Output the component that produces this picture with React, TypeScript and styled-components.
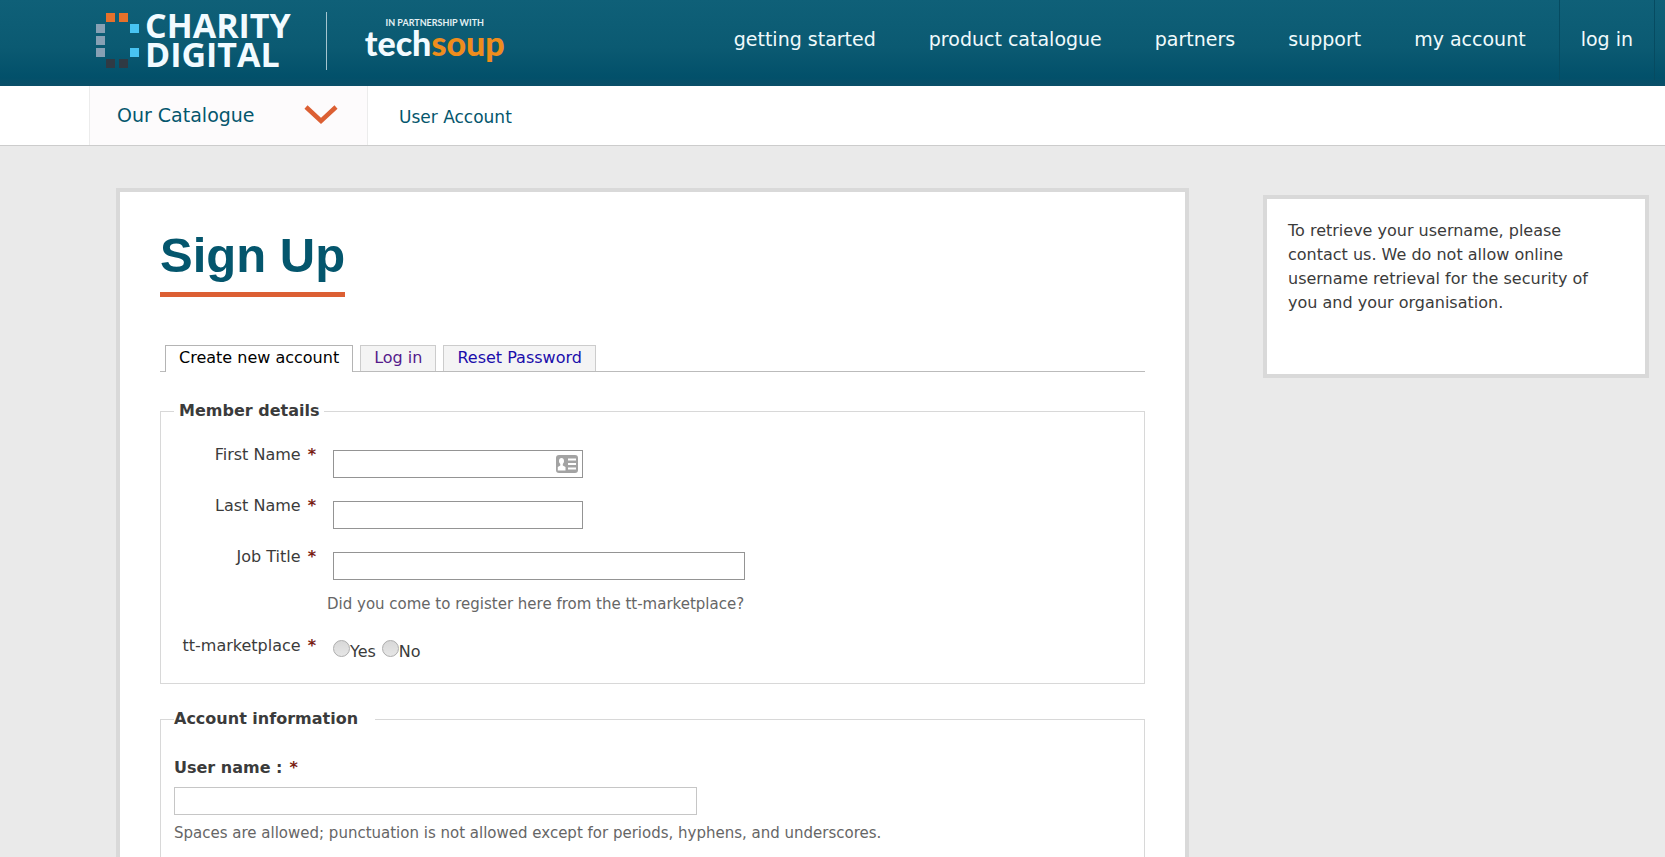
import React from "react";
import styled, { createGlobalStyle } from "styled-components";

const teal = "#04566d";
const orange = "#dc5f33";

const GlobalStyle = createGlobalStyle`
  *, *::before, *::after { box-sizing: border-box; }
  body {
    margin: 0;
    background: #eaeaea;
    color: #3b3b3b;
    font-family: "DejaVu Sans", Verdana, sans-serif;
    font-size: 16px;
    line-height: 24px;
  }
  a { text-decoration: none; }
`;

const Page = styled.div`
  display: flex;
  flex-direction: column;
  min-height: 100vh;
`;

const Header = styled.header`
  display: flex;
  justify-content: space-between;
  height: 86px;
  padding: 0 10px 0 95px;
  background: linear-gradient(#0f6078, #0b5a72 55%, #02506a 90%, #0a4f68);
`;

const Brand = styled.a`
  display: flex;
  align-items: flex-start;
  color: #fff;
`;

const LogoMark = styled.svg`
  flex: none;
  margin-top: 12px;
`;

const BrandName = styled.span`
  margin: 11px 0 0 4px;
  font: 700 34px/29px "Open Sans", "Noto Sans", sans-serif;
  color: #f2fbff;
`;

const BrandLine = styled.span`
  display: block;
`;

const BrandDivider = styled.span`
  width: 1px;
  height: 58px;
  margin: 12px 38px 0 35px;
  background: #a5c5cf;
`;

const Partner = styled.span`
  display: flex;
  flex-direction: column;
  align-items: center;
  margin-top: 17px;
`;

const PartnerNote = styled.span`
  font: 700 9px/12px Lato, sans-serif;
  color: #e3f0f3;
`;

const PartnerName = styled.span`
  font: 900 34px/28px Lato, sans-serif;
  color: #f2fbff;
`;

const PartnerAccent = styled.span`
  color: #ee8d1d;
`;

const TopNav = styled.nav`
  display: flex;
  gap: 53px;
  font-size: 19px;
  line-height: 78px;
`;

const TopLink = styled.a<{ $boxed?: boolean }>`
  color: #f0fafc;
  height: 80px;
  ${(p) =>
    p.$boxed &&
    `
    margin-left: -20px;
    padding: 0 21px 0 21px;
    border: solid #064b61;
    border-width: 0 1px;
  `}
`;

const SubNav = styled.nav`
  display: flex;
  height: 60px;
  padding-left: 89px;
  background: #fff;
  border-bottom: 1px solid #ccc;
`;

const CatalogueButton = styled.button`
  display: flex;
  align-items: center;
  justify-content: space-between;
  width: 279px;
  padding: 0 29px 2px 27px;
  border: solid #ececec;
  border-width: 0 1px;
  background: #fdfbfc;
  color: ${teal};
  font: 19px/24px "DejaVu Sans", Verdana, sans-serif;
`;

const AccountLink = styled.a`
  margin-left: 31px;
  color: ${teal};
  font-size: 17px;
  line-height: 62px;
`;

const Body = styled.div`
  display: flex;
  flex: 1;
  align-items: flex-start;
  gap: 74px;
  padding: 42px 16px 0 116px;
`;

const Panel = styled.main`
  flex: 1;
  align-self: stretch;
  display: flex;
  flex-direction: column;
  align-items: stretch;
  padding: 36px 40px 0;
  border: 4px solid #d9d9d9;
  border-bottom: 0;
  background: #fff;
`;

const Title = styled.h1`
  align-self: flex-start;
  margin: 0 0 48px;
  padding-bottom: 10px;
  border-bottom: 5px solid ${orange};
  color: ${teal};
  font: 700 49px/54px "Liberation Sans", Arial, sans-serif;
`;

const Tabs = styled.nav`
  display: flex;
  gap: 7px;
  padding-left: 5px;
  border-bottom: 1px solid #bbb;
`;

const Tab = styled.a<{ $active?: boolean; $visited?: boolean }>`
  height: ${(p) => (p.$active ? 27 : 26)}px;
  margin-bottom: ${(p) => (p.$active ? -1 : 0)}px;
  padding: 0 13px;
  border: 1px solid ${(p) => (p.$active ? "#b4b4b4" : "#ccc")};
  border-bottom: 0;
  background: ${(p) => (p.$active ? "#fff" : "#f4f4f4")};
  color: ${(p) => (p.$active ? "#000" : p.$visited ? "#551a8b" : "#1a0dab")};
`;

const Form = styled.form`
  display: flex;
  flex: 1;
  flex-direction: column;
`;

const Fieldset = styled.fieldset<{ $open?: boolean }>`
  min-width: 0;
  margin: ${(p) => (p.$open ? 23 : 27)}px 0 0;
  padding: ${(p) => (p.$open ? "25px 13px 4px" : "20px 13px 3px 0")};
  border: 1px solid #d8d8d8;
  ${(p) => p.$open && "flex: 1; border-bottom: 0;"}
`;

const Legend = styled.legend<{ $flush?: boolean }>`
  margin-left: ${(p) => (p.$flush ? 0 : 13)}px;
  padding: ${(p) => (p.$flush ? "0 17px 0 0" : "0 5px")};
  font-weight: 700;
`;

const Row = styled.div`
  display: grid;
  grid-template-columns: 155px 1fr;
  column-gap: 17px;
  margin-bottom: 16px;
`;

const RowLabel = styled.label`
  text-align: right;
`;

const Required = styled.span`
  margin-left: 7px;
  color: #7a1d13;
  font-weight: 700;
`;

const InputWrap = styled.div<{ $width: number }>`
  position: relative;
  width: ${(p) => p.$width}px;
  max-width: 100%;
  height: 28px;
  margin-top: 7px;
`;

const TextInput = styled.input<{ $light?: boolean }>`
  display: block;
  width: 100%;
  height: 28px;
  padding: 2px 6px;
  border: 1px solid ${(p) => (p.$light ? "#c6c6c6" : "#949494")};
  background: #fff;
  font: inherit;
`;

const ContactIcon = styled.svg`
  position: absolute;
  top: 5px;
  right: 5px;
`;

const Hint = styled.p<{ $indent?: boolean }>`
  margin: ${(p) => (p.$indent ? "-4px 0 18px 166px" : "6px 0 0")};
  color: #666;
  font-size: 15px;
`;

const RadioGroup = styled.div`
  display: flex;
  gap: 6px;
  margin-top: 6px;
`;

const RadioLabel = styled.label`
  display: flex;
  align-items: flex-start;
`;

const Radio = styled.input`
  appearance: none;
  width: 17px;
  height: 17px;
  margin: 0;
  border: 1px solid #adadad;
  border-radius: 50%;
  background: linear-gradient(#d8d8d8, #e6e6e6);
`;

const BlockLabel = styled.label`
  display: block;
  font-weight: 700;
`;

const Aside = styled.aside`
  flex: 0 0 386px;
  min-height: 183px;
  margin-top: 7px;
  padding: 20px 40px 20px 21px;
  border: 4px solid #d9d9d9;
  background: #fff;
`;

const AsideText = styled.p`
  margin: 0;
`;

const links = ["getting started", "product catalogue", "partners", "support", "my account"];

const squares: [number, number, string][] = [
  [11, 1, "#e6712b"],
  [24, 1, "#e6712b"],
  [1, 12, "#87a0b4"],
  [1, 24, "#87a0b4"],
  [1, 36, "#87a0b4"],
  [35, 12, "#48c4f2"],
  [35, 36, "#48c4f2"],
  [11, 47, "#2f3a44"],
  [24, 47, "#2f3a44"],
];

function Field({ id, label, width, icon }: { id: string; label: string; width: number; icon?: boolean }) {
  return (
    <Row>
      <RowLabel htmlFor={id}>
        {label}
        <Required>*</Required>
      </RowLabel>
      <InputWrap $width={width}>
        <TextInput id={id} type="text" />
        {icon && (
          <ContactIcon width="22" height="18" viewBox="0 0 22 18" aria-hidden="true">
            <rect width="22" height="18" rx="3" fill="#a3a3a3" />
            <path
              d="M5.5 3C7 3 8 4.200 8 6C8 7.300 7.500 8.300 6.800 8.900V10.500L9.500 12V15.500H1.800V12L4.300 10.500V8.900C3.500 8.300 3 7.300 3 6C3 4.200 4 3 5.500 3Z"
              fill="#fff"
            />
            <path d="M12 4.500H20M12 9H20M12 13.500H20" stroke="#fff" strokeWidth="2" />
          </ContactIcon>
        )}
      </InputWrap>
    </Row>
  );
}

export default function App() {
  return (
    <>
      <GlobalStyle />
      <Page>
        <Header>
          <Brand href="#">
            <LogoMark width="46" height="58" viewBox="0 0 46 58" aria-hidden="true">
              {squares.map(([x, y, fill]) => (
                <rect key={`${x}-${y}`} x={x} y={y} width="9" height="9" fill={fill} />
              ))}
            </LogoMark>
            <BrandName>
              <BrandLine>CHARITY</BrandLine>
              <BrandLine>DIGITAL</BrandLine>
            </BrandName>
            <BrandDivider />
            <Partner>
              <PartnerNote>IN PARTNERSHIP WITH</PartnerNote>
              <PartnerName>
                tech<PartnerAccent>soup</PartnerAccent>
              </PartnerName>
            </Partner>
          </Brand>
          <TopNav>
            {links.map((text) => (
              <TopLink key={text} href="#">
                {text}
              </TopLink>
            ))}
            <TopLink href="#" $boxed>
              log in
            </TopLink>
          </TopNav>
        </Header>
        <SubNav>
          <CatalogueButton type="button">
            Our Catalogue
            <svg width="34" height="20" viewBox="0 0 34 20" aria-hidden="true">
              <path d="M2 2L17 16L32 2" fill="none" stroke={orange} strokeWidth="4.500" />
            </svg>
          </CatalogueButton>
          <AccountLink href="#">User Account</AccountLink>
        </SubNav>
        <Body>
          <Panel>
            <Title>Sign Up</Title>
            <Tabs>
              <Tab href="#" $active>
                Create new account
              </Tab>
              <Tab href="#" $visited>
                Log in
              </Tab>
              <Tab href="#">Reset Password</Tab>
            </Tabs>
            <Form>
              <Fieldset>
                <Legend>Member details</Legend>
                <Field id="first-name" label="First Name" width={250} icon />
                <Field id="last-name" label="Last Name" width={250} />
                <Field id="job-title" label="Job Title" width={412} />
                <Hint $indent>Did you come to register here from the tt-marketplace?</Hint>
                <Row role="radiogroup" aria-labelledby="marketplace">
                  <RowLabel as="span" id="marketplace">
                    tt-marketplace
                    <Required>*</Required>
                  </RowLabel>
                  <RadioGroup>
                    <RadioLabel>
                      <Radio type="radio" name="marketplace" />
                      Yes
                    </RadioLabel>
                    <RadioLabel>
                      <Radio type="radio" name="marketplace" />
                      No
                    </RadioLabel>
                  </RadioGroup>
                </Row>
              </Fieldset>
              <Fieldset $open>
                <Legend $flush>Account information</Legend>
                <BlockLabel htmlFor="user-name">
                  User name :<Required>*</Required>
                </BlockLabel>
                <InputWrap $width={523}>
                  <TextInput id="user-name" type="text" $light />
                </InputWrap>
                <Hint>Spaces are allowed; punctuation is not allowed except for periods, hyphens, and underscores.</Hint>
              </Fieldset>
            </Form>
          </Panel>
          <Aside>
            <AsideText>
              To retrieve your username, please contact us. We do not allow online username retrieval for the security of
              you and your organisation.
            </AsideText>
          </Aside>
        </Body>
      </Page>
    </>
  );
}
